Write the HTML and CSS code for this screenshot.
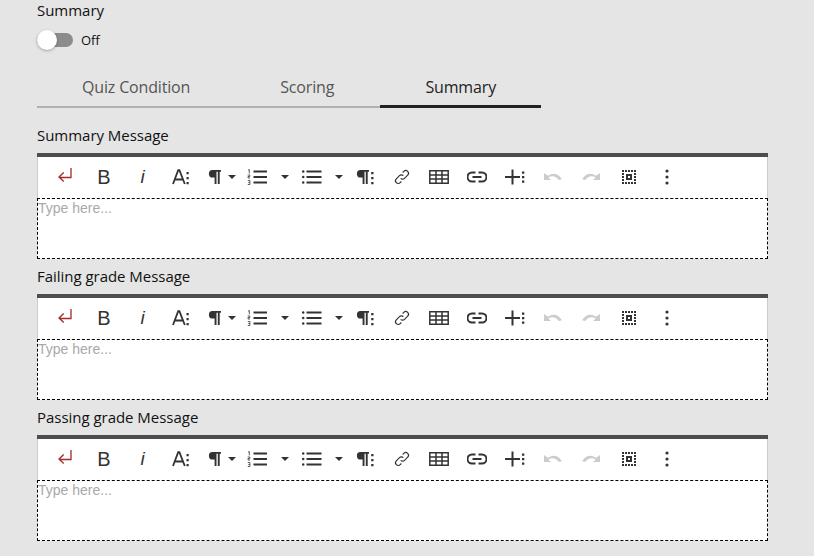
FILE: index.html
```html
<!DOCTYPE html>
<html lang="en">
<head>
<meta charset="utf-8">
<title>Quiz summary</title>
<link rel="stylesheet" href="styles.css">
</head>
<body>
<svg class="defs" width="0" height="0" aria-hidden="true">
  <symbol id="i-enter" viewBox="0 0 20 20"><path d="M16 1v9.500H4M8.700 5.500L4 10l4.700 4.500" fill="none" stroke="#a52a2a" stroke-width="1.300"/></symbol>
  <symbol id="i-size" viewBox="0 0 20 20"><path d="M4 17L9.200 3.200h1.200L15.800 17M6 12.500h7.800" fill="none" stroke="#333" stroke-width="1.800"/><path d="M17.500 5h2.200v2.200h-2.200zM17.500 10h2.200v2.200h-2.200zM17.500 15h2.200v2.200h-2.200z" fill="#333"/></symbol>
  <symbol id="i-para" viewBox="0 0 20 20"><path d="M8.500 3H17v1.700h-1.300V17h-1.900V4.700h-1.300V17h-1.900v-6.500H8.800a3.750 3.750 0 0 1-.3-7.500z" fill="#333"/></symbol>
  <symbol id="i-parad" viewBox="0 0 20 20"><path d="M5.500 3H14v1.700h-1.300V17h-1.900V4.700H9.500V17H7.600v-6.500H5.800a3.750 3.750 0 0 1-.3-7.500z" fill="#333"/><path d="M16.200 5h2.300v2.300h-2.300zM16.200 10h2.300v2.300h-2.300zM16.200 15h2.300v2.300h-2.300z" fill="#333"/></symbol>
  <symbol id="i-ol" viewBox="0 0 20 20"><path d="M6.500 4.500h13.500M6.500 10h13.500M6.500 15.500h13.500" stroke="#333" stroke-width="1.900"/><path d="M1 3.200l1.300-.7v3.900M.7 8h2.100v1.500H1v1.500h2M.8 13.500h2.100v4H.8M1.300 15.500h1.500" fill="none" stroke="#333" stroke-width=".8"/></symbol>
  <symbol id="i-ul" viewBox="0 0 20 20"><path d="M4.500 4.500h15M4.500 10h15M4.500 15.500h15" stroke="#333" stroke-width="1.900"/><circle cx="1.200" cy="4.500" r="1.300" fill="#333"/><circle cx="1.200" cy="10" r="1.300" fill="#333"/><circle cx="1.200" cy="15.500" r="1.300" fill="#333"/></symbol>
  <symbol id="i-link" viewBox="0 0 20 20"><path d="M8.500 11.500a3 3 0 0 0 4.300 0l3.500-3.500a3 3 0 0 0-4.300-4.300l-1.300 1.300M11.500 8.500a3 3 0 0 0-4.300 0l-3.500 3.500a3 3 0 0 0 4.300 4.300l1.300-1.300" fill="none" stroke="#333" stroke-width="1.300"/></symbol>
  <symbol id="i-table" viewBox="0 0 20 20"><path d="M.800 3.800h18.400v12.400H.800zM.800 8h18.400M.800 12h18.400M7 3.800v12.400M13 3.800v12.400" fill="none" stroke="#333" stroke-width="1.500"/></symbol>
  <symbol id="i-chain" viewBox="0 0 20 20"><path d="M8.500 5.500H5a4.500 4.500 0 0 0 0 9h3.500M11.500 5.500H15a4.500 4.500 0 0 1 0 9h-3.500M5.500 10h9" fill="none" stroke="#333" stroke-width="2"/></symbol>
  <symbol id="i-plus" viewBox="0 0 20 20"><path d="M7.500 2.500v15M0 10h15" stroke="#333" stroke-width="2"/><path d="M17 4.500h2.300v2.300H17zM17 9h2.300v2.300H17zM17 13.500h2.300v2.300H17z" fill="#333"/></symbol>
  <symbol id="i-undo" viewBox="0 0 20 20"><path d="M1 6v7h7l-2.600-2.600c3.600-2.300 8-1.200 10.500 2.600l3-.8C15.700 6.400 10 5 5 8.800L1 6z" fill="#ccc"/></symbol>
  <symbol id="i-redo" viewBox="0 0 20 20"><path d="M19 6v7h-7l2.600-2.600c-3.600-2.300-8-1.200-10.500 2.600l-3-.8C4.300 6.400 10 5 15 8.800L19 6z" fill="#ccc"/></symbol>
  <symbol id="i-select" viewBox="0 0 20 20"><path d="M3 3h2v2H3zM6 3h2v2H6zM9 3h2v2H9zM12 3h2v2h-2zM15 3h2v2h-2zM3 15h2v2H3zM6 15h2v2H6zM9 15h2v2H9zM12 15h2v2h-2zM15 15h2v2h-2zM3 6h2v2H3zM3 9h2v2H3zM3 12h2v2H3zM15 6h2v2h-2zM15 9h2v2h-2zM15 12h2v2h-2z" fill="#333"/><path d="M7 7h6v6H7z" fill="#333"/><path d="M9 9h2v2H9z" fill="#fff"/></symbol>
  <symbol id="i-more" viewBox="0 0 20 20"><circle cx="10" cy="4" r="1.600" fill="#333"/><circle cx="10" cy="10" r="1.600" fill="#333"/><circle cx="10" cy="16" r="1.600" fill="#333"/></symbol>
  <symbol id="i-caret" viewBox="0 0 10 10"><path d="M1 3h8L5 7z" fill="#333"/></symbol>
</svg>

<main class="page">
  <div class="field-label">Summary</div>
  <div class="toggle-row">
    <span class="toggle"><span class="knob"></span></span>
    <span class="toggle-text">Off</span>
  </div>
  <nav class="tabs">
    <span class="tab">Quiz Condition</span>
    <span class="tab">Scoring</span>
    <span class="tab active">Summary</span>
  </nav>

  <section class="block first">
    <div class="field-label">Summary Message</div>
    <div class="editor">
      <div class="toolbar">
        <span class="b b38"><svg class="ic"><use href="#i-enter"/></svg></span>
        <span class="b b38"><span class="bold">B</span></span>
        <span class="b b38"><span class="ital">i</span></span>
        <span class="b b38"><svg class="ic"><use href="#i-size"/></svg></span>
        <span class="b para"><svg class="ic"><use href="#i-para"/></svg><svg class="caret"><use href="#i-caret"/></svg></span>
        <span class="b list ol"><svg class="ic"><use href="#i-ol"/></svg><svg class="caret"><use href="#i-caret"/></svg></span>
        <span class="b list"><svg class="ic"><use href="#i-ul"/></svg><svg class="caret"><use href="#i-caret"/></svg></span>
        <span class="b b38"><svg class="ic"><use href="#i-parad"/></svg></span>
        <span class="b b36"><svg class="ic sm"><use href="#i-link"/></svg></span>
        <span class="b b38"><svg class="ic"><use href="#i-table"/></svg></span>
        <span class="b b38"><svg class="ic"><use href="#i-chain"/></svg></span>
        <span class="b b38"><svg class="ic"><use href="#i-plus"/></svg></span>
        <span class="b b38"><svg class="ic"><use href="#i-undo"/></svg></span>
        <span class="b b38"><svg class="ic"><use href="#i-redo"/></svg></span>
        <span class="b b38"><svg class="ic"><use href="#i-select"/></svg></span>
        <span class="b b38"><svg class="ic"><use href="#i-more"/></svg></span>
      </div>
      <div class="content">Type here...</div>
    </div>
  </section>

  <section class="block">
    <div class="field-label">Failing grade Message</div>
    <div class="editor">
      <div class="toolbar">
        <span class="b b38"><svg class="ic"><use href="#i-enter"/></svg></span>
        <span class="b b38"><span class="bold">B</span></span>
        <span class="b b38"><span class="ital">i</span></span>
        <span class="b b38"><svg class="ic"><use href="#i-size"/></svg></span>
        <span class="b para"><svg class="ic"><use href="#i-para"/></svg><svg class="caret"><use href="#i-caret"/></svg></span>
        <span class="b list ol"><svg class="ic"><use href="#i-ol"/></svg><svg class="caret"><use href="#i-caret"/></svg></span>
        <span class="b list"><svg class="ic"><use href="#i-ul"/></svg><svg class="caret"><use href="#i-caret"/></svg></span>
        <span class="b b38"><svg class="ic"><use href="#i-parad"/></svg></span>
        <span class="b b36"><svg class="ic sm"><use href="#i-link"/></svg></span>
        <span class="b b38"><svg class="ic"><use href="#i-table"/></svg></span>
        <span class="b b38"><svg class="ic"><use href="#i-chain"/></svg></span>
        <span class="b b38"><svg class="ic"><use href="#i-plus"/></svg></span>
        <span class="b b38"><svg class="ic"><use href="#i-undo"/></svg></span>
        <span class="b b38"><svg class="ic"><use href="#i-redo"/></svg></span>
        <span class="b b38"><svg class="ic"><use href="#i-select"/></svg></span>
        <span class="b b38"><svg class="ic"><use href="#i-more"/></svg></span>
      </div>
      <div class="content">Type here...</div>
    </div>
  </section>

  <section class="block">
    <div class="field-label">Passing grade Message</div>
    <div class="editor">
      <div class="toolbar">
        <span class="b b38"><svg class="ic"><use href="#i-enter"/></svg></span>
        <span class="b b38"><span class="bold">B</span></span>
        <span class="b b38"><span class="ital">i</span></span>
        <span class="b b38"><svg class="ic"><use href="#i-size"/></svg></span>
        <span class="b para"><svg class="ic"><use href="#i-para"/></svg><svg class="caret"><use href="#i-caret"/></svg></span>
        <span class="b list ol"><svg class="ic"><use href="#i-ol"/></svg><svg class="caret"><use href="#i-caret"/></svg></span>
        <span class="b list"><svg class="ic"><use href="#i-ul"/></svg><svg class="caret"><use href="#i-caret"/></svg></span>
        <span class="b b38"><svg class="ic"><use href="#i-parad"/></svg></span>
        <span class="b b36"><svg class="ic sm"><use href="#i-link"/></svg></span>
        <span class="b b38"><svg class="ic"><use href="#i-table"/></svg></span>
        <span class="b b38"><svg class="ic"><use href="#i-chain"/></svg></span>
        <span class="b b38"><svg class="ic"><use href="#i-plus"/></svg></span>
        <span class="b b38"><svg class="ic"><use href="#i-undo"/></svg></span>
        <span class="b b38"><svg class="ic"><use href="#i-redo"/></svg></span>
        <span class="b b38"><svg class="ic"><use href="#i-select"/></svg></span>
        <span class="b b38"><svg class="ic"><use href="#i-more"/></svg></span>
      </div>
      <div class="content">Type here...</div>
    </div>
  </section>
</main>
</body>
</html>
```
FILE: styles.css
```css
* { box-sizing: border-box; }
html, body { margin: 0; height: 100%; }
body {
  background: #e5e5e5;
  font-family: "Open Sans", sans-serif;
  color: #111;
  overflow: hidden;
}
.defs { position: absolute; }
.page { width: 768px; padding: 1px 0 0 37px; }
.field-label { font-size: 15px; line-height: 19px; letter-spacing: -.03px; }
.toggle-row { display: flex; align-items: center; height: 20px; margin-top: 10px; }
.toggle { position: relative; display: block; width: 36px; height: 14px; border-radius: 7px; background: #8c8c8c; }
.knob {
  position: absolute; left: 0; top: -3px; width: 20px; height: 20px; border-radius: 50%;
  background: #fff; box-shadow: 0 1px 3px rgba(0,0,0,.3);
}
.toggle-text { font-size: 13px; margin-left: 8px; }
.tabs { display: flex; width: 504px; margin-top: 20px; border-bottom: 2px solid #b0b0b0; height: 38px; }
.tab {
  flex: none; padding: 6px 45px 0; text-align: center; font-size: 16px; line-height: 22px; letter-spacing: -.16px; color: #555; height: 38px;
}
.tab.active { margin-left: auto; color: #222; border-bottom: 3px solid #222; }
.block { margin-top: 8px; }
.block.first { margin-top: 18px; }
.block .field-label { height: 19px; margin-bottom: 8px; }
.editor { width: 731px; background: #fff; border-top: 4px solid #4d4d4d; }
.toolbar { display: flex; height: 41px; padding: 0 0 1px 8px; align-items: center; border-left: 1px solid #ccc; border-right: 1px solid #ccc; }
.b { display: flex; align-items: center; justify-content: center; height: 40px; flex: none; color: #333; }
.b38 { width: 38px; }
.b36 { width: 36px; }
.para { width: 40px; justify-content: flex-start; padding-left: 6px; }
.list { width: 54px; justify-content: flex-start; padding-left: 10px; }
.list.ol { padding-left: 9px; }
.ic { width: 20px; height: 20px; display: block; }
.ic.sm { width: 18px; height: 18px; }
.caret { width: 10px; height: 10px; margin-left: 3px; display: block; }
.list .caret { margin-left: 12px; }
.list.ol .caret { margin-left: 13px; }
.bold { font-family: "Liberation Sans", sans-serif; font-size: 20px; line-height: 20px; padding-left: 2px; }
.ital { font-family: "Liberation Sans", sans-serif; font-style: italic; font-size: 19px; line-height: 20px; padding-left: 3px; }
.content {
  height: 61px; border: 1px dashed #000; font-family: "Liberation Sans", sans-serif; font-size: 14px; line-height: 18px; color: #a9a9a9;
}
```
